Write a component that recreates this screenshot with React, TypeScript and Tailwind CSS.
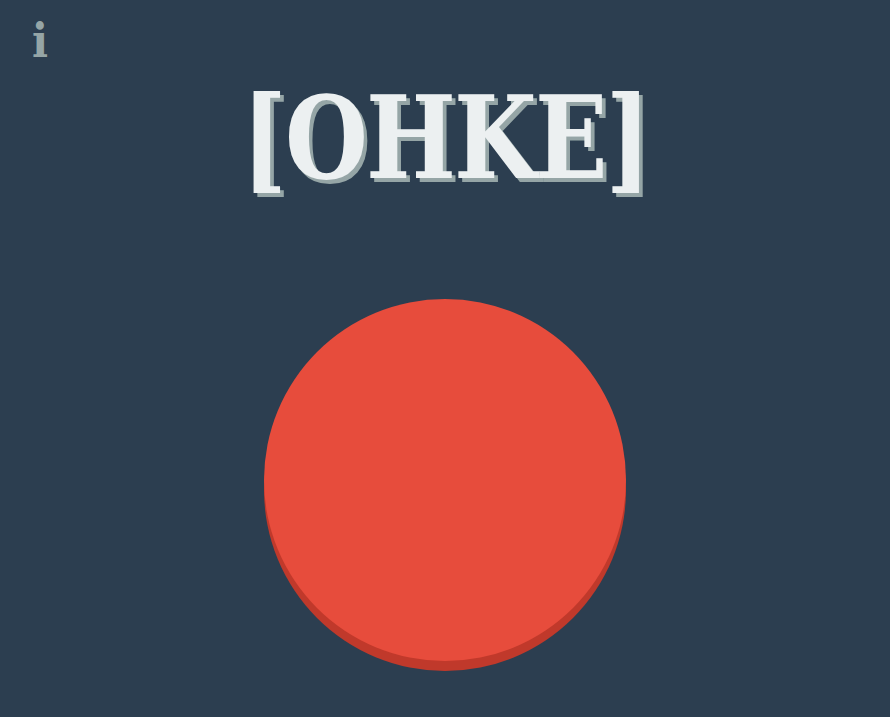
export default function App() {
  return (
    <div className="relative flex h-[717px] w-full flex-col items-center overflow-hidden bg-[#2c3e50]">
      <button
        type="button"
        className="absolute left-[32px] top-[17px] text-[47px] font-bold leading-none text-[#95a5a6]"
        style={{ fontFamily: '"DejaVu Serif Condensed", "DejaVu Serif", serif' }}
      >
        i
      </button>

      <h1
        className="mt-[80px] scale-x-[0.92] text-[115px] font-bold leading-none tracking-[-2px] text-[#ecf0f1] [text-shadow:4px_4px_0_#95a5a6]"
        style={{ fontFamily: '"DejaVu Serif Condensed", "DejaVu Serif", serif' }}
      >
        [OHKE]
      </h1>

      <button
        type="button"
        className="mt-[104px] h-[362px] w-[362px] rounded-full bg-[#e74c3c] shadow-[0_10px_0_#c0392b]"
      />
    </div>
  );
}
